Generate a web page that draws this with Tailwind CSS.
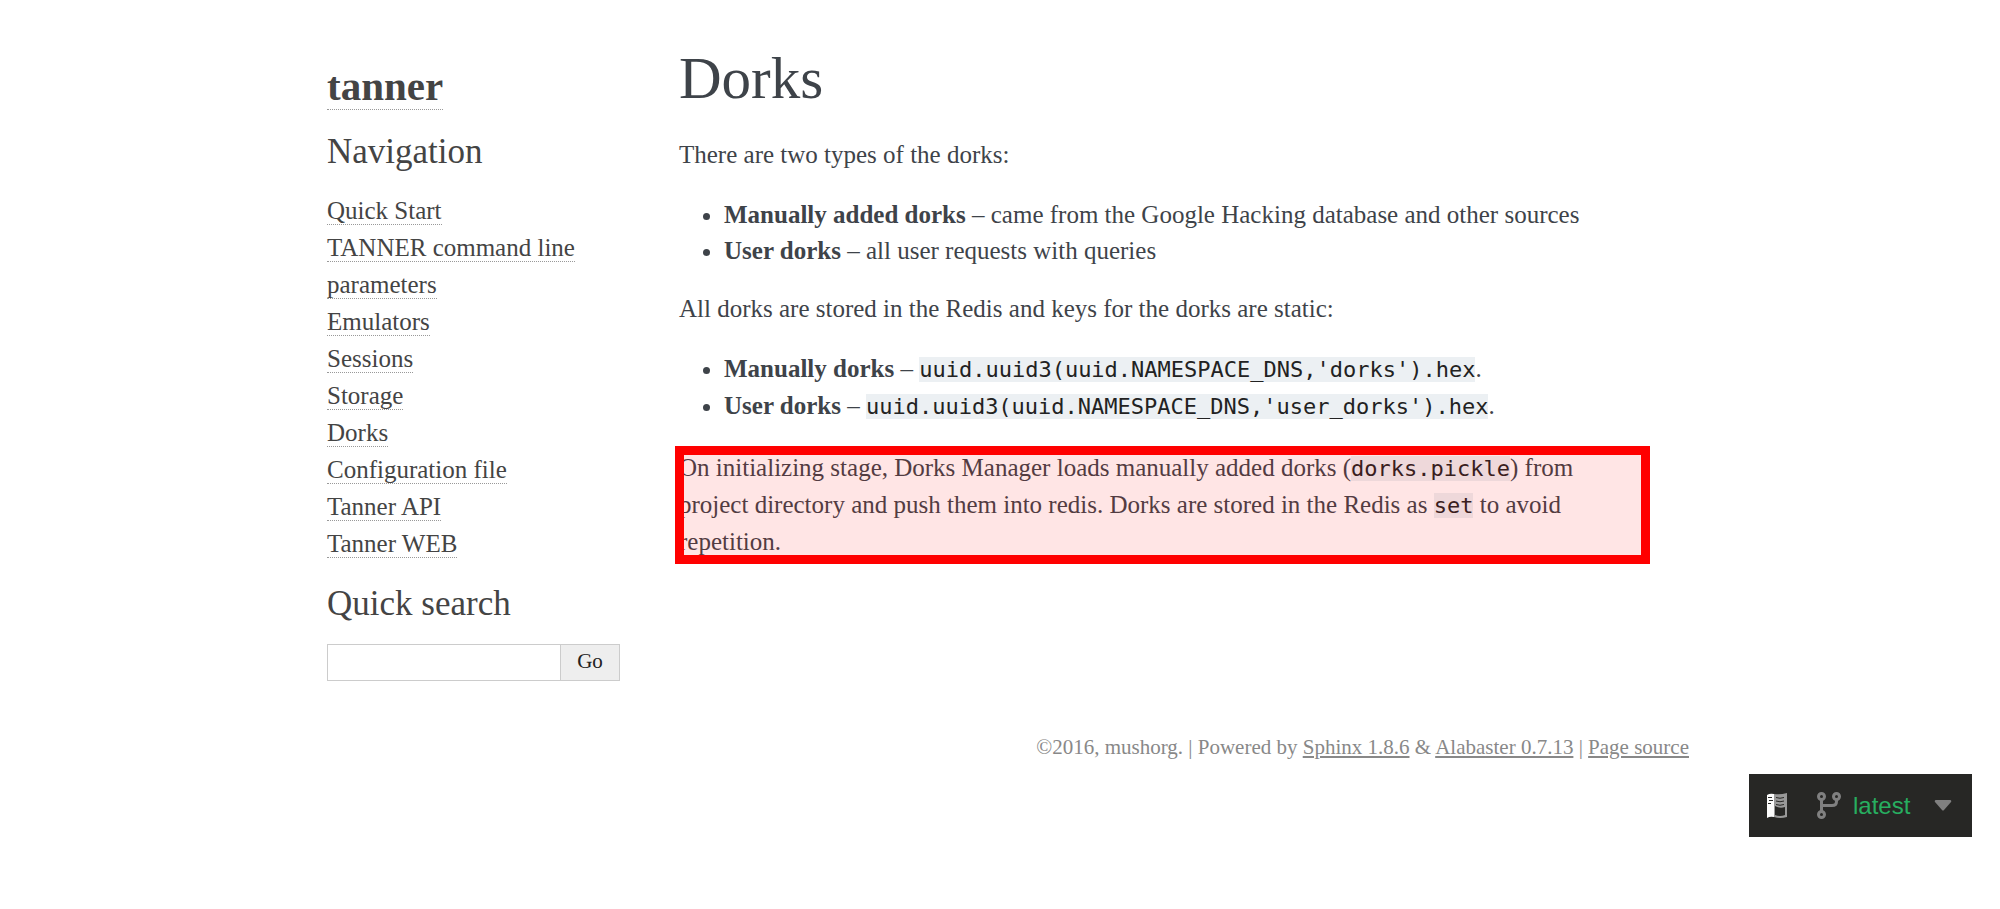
<!DOCTYPE html>
<html lang="en">
<head>
<meta charset="utf-8">
<title>Dorks — tanner documentation</title>
<script src="https://cdn.jsdelivr.net/npm/@tailwindcss/browser@4"></script>
</head>
<body class="bg-white pl-4 font-['Liberation_Serif',serif] text-[25px] leading-[36px] text-[#3e4349]">
<div class="mx-auto max-w-[1362px]">
  <div class="flex gap-[59px] pt-[44px]">
    <aside class="w-[293px] shrink-0 pt-[18px] text-[#444]">
      <h1 class="text-[41px] leading-[48px] font-bold"><a href="#" class="border-b border-dotted border-[#999]">tanner</a></h1>
      <h3 class="mt-[22px] text-[35px] leading-[40px]">Navigation</h3>
      <ul class="mt-[20px] text-[25px] leading-[37px]">
        <li><a href="#" class="border-b border-dotted border-[#999]">Quick Start</a></li>
        <li><a href="#" class="border-b border-dotted border-[#999]">TANNER command line parameters</a></li>
        <li><a href="#" class="border-b border-dotted border-[#999]">Emulators</a></li>
        <li><a href="#" class="border-b border-dotted border-[#999]">Sessions</a></li>
        <li><a href="#" class="border-b border-dotted border-[#999]">Storage</a></li>
        <li><a href="#" class="border-b border-dotted border-[#999]">Dorks</a></li>
        <li><a href="#" class="border-b border-dotted border-[#999]">Configuration file</a></li>
        <li><a href="#" class="border-b border-dotted border-[#999]">Tanner API</a></li>
        <li><a href="#" class="border-b border-dotted border-[#999]">Tanner WEB</a></li>
      </ul>
      <h3 class="mt-[22px] text-[35px] leading-[40px]" id="searchlabel">Quick search</h3>
      <form class="mt-[20px] flex h-[37px]" onsubmit="return false">
        <input type="text" aria-labelledby="searchlabel" class="min-w-0 flex-1 border border-[#ccc] bg-white px-2 text-xl text-black outline-none">
        <button type="submit" class="-ml-px w-[60px] border border-[#ccc] bg-[#eee] pb-1 text-[21px] leading-[28px] text-[#222]">Go</button>
      </form>
    </aside>
    <main class="min-w-0 max-w-[967px] flex-1">
      <h1 class="text-[59px] leading-[68px]">Dorks</h1>
      <p class="mt-[25px]">There are two types of the dorks:</p>
      <ul class="mt-[24px] list-disc pl-[45px]">
        <li><strong>Manually added dorks</strong> – came from the Google Hacking database and other sources</li>
        <li><strong>User dorks</strong> – all user requests with queries</li>
      </ul>
      <p class="mt-[22px]">All dorks are stored in the Redis and keys for the dorks are static:</p>
      <ul class="mt-[24px] list-disc pl-[45px]">
        <li><strong>Manually dorks</strong> – <code class="bg-[#ecf0f3] font-['DejaVu_Sans_Mono',monospace] text-[22px] text-[#222]">uuid.uuid3(uuid.NAMESPACE_DNS,'dorks').hex</code>.</li>
        <li><strong>User dorks</strong> – <code class="bg-[#ecf0f3] font-['DejaVu_Sans_Mono',monospace] text-[22px] text-[#222]">uuid.uuid3(uuid.NAMESPACE_DNS,'user_dorks').hex</code>.</li>
      </ul>
      <div class="relative mt-[25px]">
        <p>On initializing stage, Dorks Manager loads manually added dorks (<code class="bg-[#ecf0f3] font-['DejaVu_Sans_Mono',monospace] text-[22px] text-[#222]">dorks.pickle</code>) from project directory and push them into redis. Dorks are stored in the Redis as <code class="bg-[#ecf0f3] font-['DejaVu_Sans_Mono',monospace] text-[22px] text-[#222]">set</code> to avoid repetition.</p>
        <div class="absolute -inset-x-1 -top-1 -bottom-1 border-[9px] border-[#f00] bg-[#f00]/10 bg-clip-padding"></div>
      </div>
    </main>
  </div>
  <footer class="mt-[52px] text-right text-[21px] leading-[28px] text-[#888]">©2016, mushorg. | Powered by <a href="#" class="underline">Sphinx 1.8.6</a> &amp; <a href="#" class="underline">Alabaster 0.7.13</a> | <a href="#" class="underline">Page source</a></footer>
</div>
<button type="button" class="fixed right-[28px] bottom-[72px] flex h-[63px] w-[223px] items-center bg-[#272725] pl-[18px] font-['Liberation_Sans',sans-serif] text-[24px] text-[#27ae60]">
  <svg class="h-[26px] w-[20px]" viewBox="0 0 20 26" aria-hidden="true">
    <path fill="#fcfcfc" d="M0 2Q3 0 7 1V24Q3 23 0 25Z"/>
    <path fill="#999" d="M7 1Q13 2 20 0V24Q13 26 7 24Z"/>
    <path fill="#272725" d="M8 13Q13 16 18 14V22Q13 24 8 22Z"/>
    <path fill="none" stroke="#272725" d="M1 4.500H5M2 7.500H6M1 10.500H4M9 4.500Q13 6 17 4.500M9 8Q13 9.500 17 8M9 11.500Q13 13 17 11.500"/>
  </svg>
  <svg class="ml-[30px] h-[27px] w-[24px]" viewBox="0 0 24 27" fill="none" stroke="#808080" stroke-width="3" aria-hidden="true">
    <circle cx="4.500" cy="4.500" r="3"/><circle cx="19.500" cy="4.500" r="3"/><circle cx="4.500" cy="22.500" r="3"/>
    <path d="M4.500 7.500V19.500M19.500 7.500V9.500Q19.500 13.500 15 13.500H4.500"/>
  </svg>
  <span class="ml-[12px] leading-[28px]">latest</span>
  <svg class="ml-[24px] h-[11px] w-[18px]" viewBox="0 0 18 11" fill="#808080" aria-hidden="true"><path d="M1.500 0H16.500Q18 1 17 2L10 10Q9 11 8 10L1 2Q0 1 1.500 0Z"/></svg>
</button>
</body>
</html>
